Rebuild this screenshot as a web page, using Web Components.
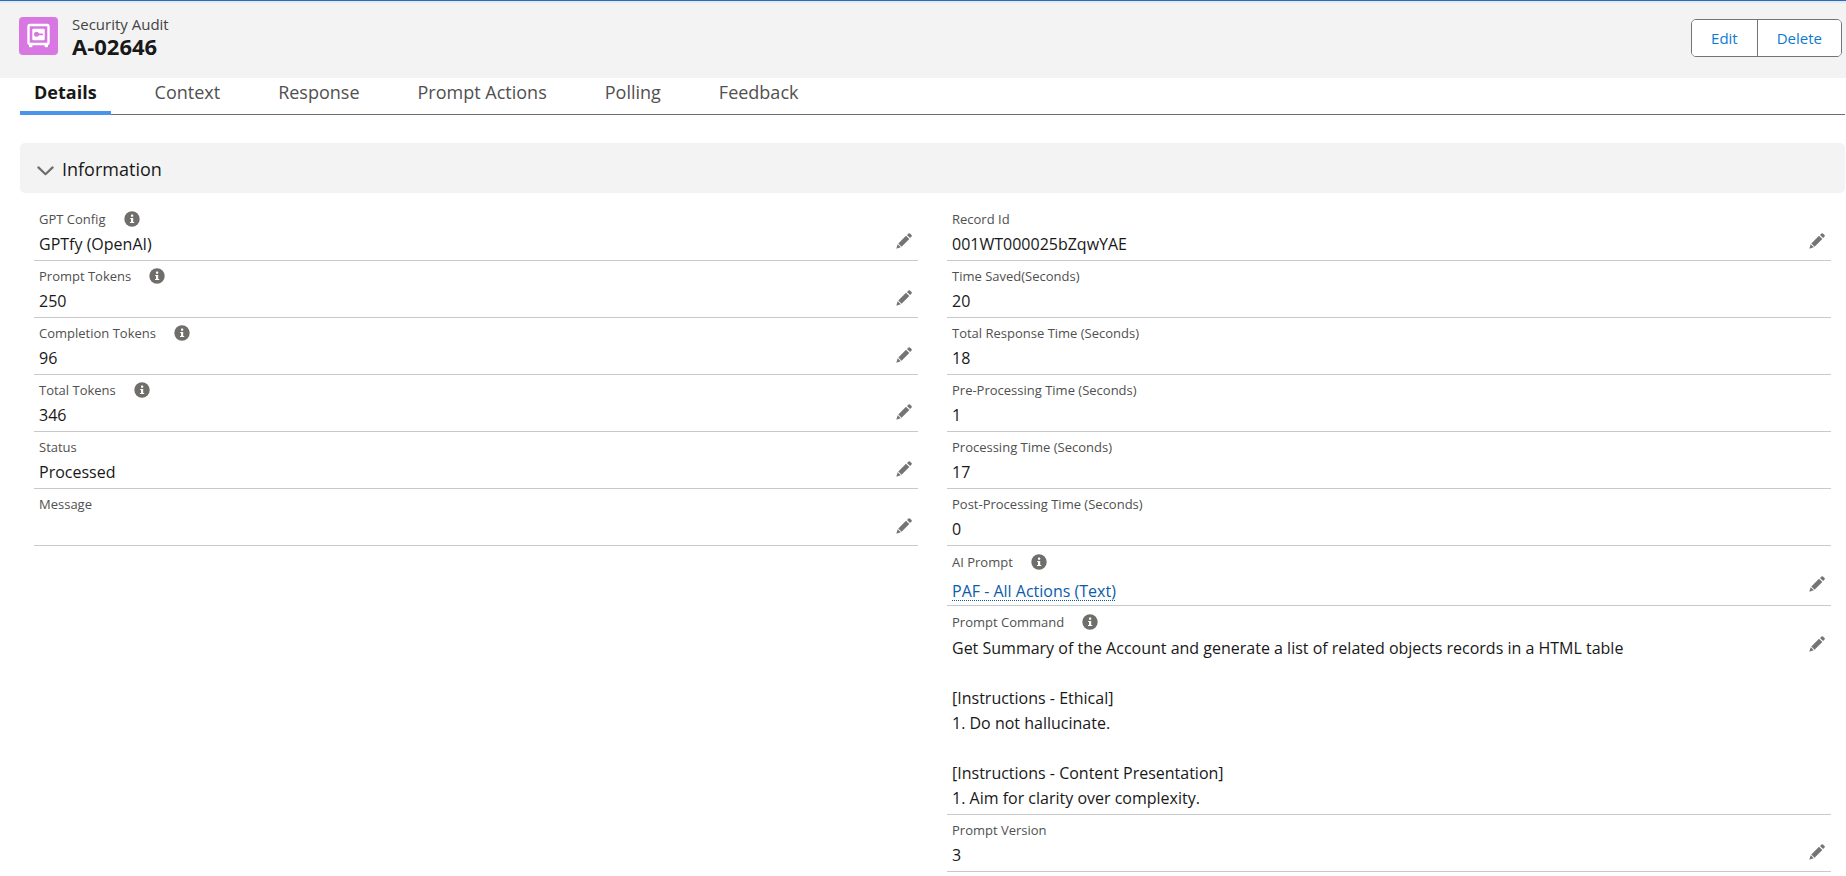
<!DOCTYPE html>
<html lang="en">
<head>
<meta charset="utf-8">
<title>A-02646 | Security Audit</title>
<style>
  body { margin: 0; background: #fff; color: #181818; font: 16px/25px "Open Sans", "Noto Sans", sans-serif; }
</style>
</head>
<body>
<audit-page></audit-page>
<script>
class BaseElement extends HTMLElement {
  constructor() { super(); this.attachShadow({ mode: "open" }); }
  connectedCallback() { this.shadowRoot.innerHTML = this.render(); }
}

/* Purple tile with a safe */
customElements.define("audit-icon", class extends BaseElement {
  render() {
    return `<style>
      :host { display: block; flex: none; width: 39px; height: 38px; border-radius: 4px; background: #d877e2; }
      svg { display: block; }
    </style>
    <svg width="39" height="38" viewBox="0 0 39 38" aria-hidden="true">
      <rect x="9.5" y="8" width="20" height="19" rx="1.5" fill="none" stroke="#fff" stroke-width="2.4"/>
      <path d="M10 27h3.4v2.4q0 .8-1 .8h-1.4q-1 0-1-.8zM25.6 27h3.4v2.4q0 .8-1 .8h-1.4q-1 0-1-.8z" fill="#fff"/>
      <rect x="13.3" y="11.7" width="12.4" height="11.6" rx="1" fill="#fff"/>
      <circle cx="17.5" cy="17.3" r="2.5" fill="#d877e2"/>
      <rect x="18" y="16.5" width="6" height="1.8" rx=".9" fill="#d877e2"/>
    </svg>`;
  }
});

customElements.define("record-header", class extends BaseElement {
  render() {
    return `<style>
      :host { display: flex; align-items: flex-start; box-sizing: border-box; height: 78px; padding: 13px 4px 0 19px;
        background: #f3f3f3; border-top: 1px solid #2a6cb0; box-shadow: inset 0 2px #dfeaf6; }
      audit-icon { margin: 3px 14px 0 0; }
      .titles { flex: 1; }
      p, h1 { margin: 0; }
      p { font-size: 15px; line-height: 21px; color: #444; }
      h1 { font-size: 22px; line-height: 23px; font-weight: 700; }
      .actions { display: flex; margin-top: 5px; border: 1px solid #747474; border-radius: 5px; overflow: hidden; }
      button { height: 36px; padding: 0 19px; border: 0; background: #fff; color: #0b7bd0; font: inherit; font-size: 15px; }
      button + button { border-left: 1px solid #747474; }
    </style>
    <audit-icon></audit-icon>
    <div class="titles"><p>Security Audit</p><h1>A-02646</h1></div>
    <div class="actions"><button type="button">Edit</button><button type="button">Delete</button></div>`;
  }
});

customElements.define("record-tabs", class extends BaseElement {
  render() {
    const tabs = ["Details", "Context", "Response", "Prompt Actions", "Polling", "Feedback"];
    return `<style>
      :host { display: block; margin: 0 1px 0 20px; }
      nav { display: flex; gap: 30px; height: 36px; border-bottom: 1px solid #706e6b; }
      a { box-sizing: border-box; height: 37px; padding: 2px 14px 0; color: #505050; text-decoration: none; font-size: 18px; line-height: 25px; }
      a[aria-current] { color: #181818; font-weight: 700; border-bottom: 4px solid #4a94ec; }
    </style>
    <nav>${tabs.map((t, i) => `<a href="#${t.toLowerCase().replace(" ", "-")}"${i ? "" : ' aria-current="page"'}>${t}</a>`).join("")}</nav>`;
  }
});

customElements.define("record-section", class extends BaseElement {
  render() {
    return `<style>
      :host { display: block; margin: 28px 1px 0 20px; }
      h2 { margin: 0 0 11px; font-weight: 400; }
      button { display: flex; align-items: center; gap: 8px; width: 100%; height: 50px; padding: 2px 17px 0; border: 0; border-radius: 5px;
        background: #f3f3f3; color: #181818; font: inherit; font-size: 18px; text-align: left; }
      svg { flex: none; margin-top: 4px; }
      .columns { display: grid; grid-template-columns: 1fr 1fr; gap: 29px; align-items: start; padding: 0 14px; }
    </style>
    <h2><button type="button" aria-expanded="true">
      <svg width="17" height="10" viewBox="0 0 17 10" aria-hidden="true"><path d="M1.4 1.4 8.5 8.2 15.6 1.4" fill="none" stroke="#706e6b" stroke-width="2.2" stroke-linecap="round" stroke-linejoin="round"/></svg>
      ${this.getAttribute("heading")}</button></h2>
    <div class="columns"><slot></slot></div>`;
  }
});

customElements.define("record-field", class extends BaseElement {
  render() {
    const label = this.getAttribute("label");
    const info = this.hasAttribute("info") ? `<svg class="info" width="16" height="16" viewBox="0 0 16 16" role="img" aria-label="Help">
      <circle cx="8" cy="8" r="7.7" fill="#706e6b"/><rect x="7" y="3.6" width="2.2" height="2.2" rx=".6" fill="#fff"/>
      <path d="M6.2 6.9h3v4h1v1.2H6v-1.2h1V8.1h-.8z" fill="#fff"/></svg>` : "";
    const edit = this.hasAttribute("editable") ? `<button type="button" aria-label="Edit ${label}">
      <svg width="16" height="16" viewBox="0 0 16 16" aria-hidden="true"><g fill="#747474">
      <path d="M10 2.8 13.3 6.1 5.6 13.7 2.3 10.4z"/>
      <path d="M11 2l1.5-1.5q.7-.6 1.4 0l1.6 1.6q.6.7 0 1.4L14.1 5z"/>
      <path d="M1.7 11.2l3.1 3.1L1 15.6q-.7.2-.5-.5z"/></g></svg></button>` : "";
    return `<style>
      :host { display: grid; grid-template-columns: 1fr auto; box-sizing: border-box; min-height: 57px; padding: 5px 6px 3px 5px; border-bottom: 1px solid #c9c9c9; }
      :host([kind=link]) { row-gap: 4px; padding-top: 6px; padding-bottom: 1px; }
      :host([kind=long]) { row-gap: 1px; padding-top: 6px; }
      .label { display: flex; align-items: center; gap: 18px; height: 20px; font-size: 13px; line-height: 20px; color: #505050; }
      .value { grid-column: 1; margin-top: 3px; min-height: 25px; white-space: pre-line; }
      button { grid-column: 2; grid-row: 1 / span 2; align-self: start; margin: 24px 0 0; padding: 0; border: 0; background: none; height: 16px; }
      svg { display: block; flex: none; }
      ::slotted(a) { color: #0b5cab; text-decoration: underline dotted 1px; text-underline-offset: 3px; text-decoration-skip-ink: none; }
    </style>
    <div class="label"><span>${label}</span>${info}</div>
    <div class="value"><slot></slot></div>${edit}`;
  }
});

customElements.define("audit-page", class extends BaseElement {
  render() {
    return `<style>
      :host { display: block; }
    </style>
    <record-header></record-header>
    <main>
      <record-tabs></record-tabs>
      <record-section heading="Information">
        <div>
          <record-field label="GPT Config" info editable>GPTfy (OpenAI)</record-field>
          <record-field label="Prompt Tokens" info editable>250</record-field>
          <record-field label="Completion Tokens" info editable>96</record-field>
          <record-field label="Total Tokens" info editable>346</record-field>
          <record-field label="Status" editable>Processed</record-field>
          <record-field label="Message" editable></record-field>
        </div>
        <div>
          <record-field label="Record Id" editable>001WT000025bZqwYAE</record-field>
          <record-field label="Time Saved(Seconds)">20</record-field>
          <record-field label="Total Response Time (Seconds)">18</record-field>
          <record-field label="Pre-Processing Time (Seconds)">1</record-field>
          <record-field label="Processing Time (Seconds)">17</record-field>
          <record-field label="Post-Processing Time (Seconds)">0</record-field>
          <record-field label="AI Prompt" kind="link" info editable><a href="#prompt">PAF - All Actions (Text)</a></record-field>
          <record-field label="Prompt Command" kind="long" info editable>Get Summary of the Account and generate a list of related objects records in a HTML table

[Instructions - Ethical]
1. Do not hallucinate.

[Instructions - Content Presentation]
1. Aim for clarity over complexity.</record-field>
          <record-field label="Prompt Version" editable>3</record-field>
        </div>
      </record-section>
    </main>`;
  }
});
</script>
</body>
</html>
